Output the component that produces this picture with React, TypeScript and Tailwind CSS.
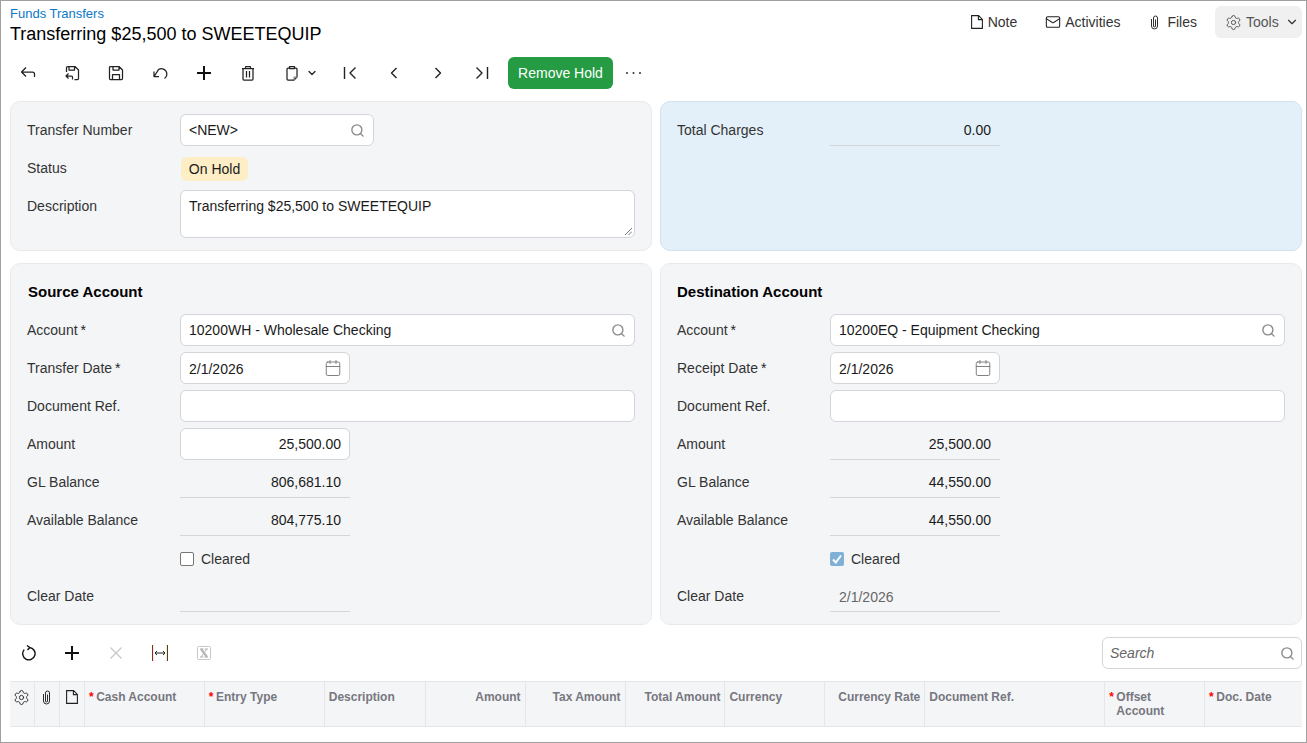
import { Calendar, ChevronDown, Mail, Search, Settings } from "lucide-react";
import type { ReactNode } from "react";

type IconProps = { className?: string };

// 16px icons, drawn 1:1 so the stroke stays at the weight of the reference
function Svg({ className = "", sw = 1.25, children }: IconProps & { sw?: number; children: ReactNode }) {
  return (
    <svg viewBox="0 0 16 16" fill="none" stroke="currentColor" strokeWidth={sw} strokeLinejoin="round" className={`h-4 w-4 ${className}`}>
      {children}
    </svg>
  );
}

const BackIcon = () => (
  <Svg><path d="M6 2.5L1.5 7 6 11.5M1.5 7H12.5a2 2 0 0 1 2 2V12" /></Svg>
);
const SaveBackIcon = () => (
  <Svg>
    <path d="M2.5 7V2.5a1 1 0 0 1 1-1H11L14.5 5v8.5a1 1 0 0 1-1 1H10.5M5 1.5V5h5.5V1.5" />
    <path d="M4.5 8.5L2 11l2.5 2.5M2 11h5.5a1 1 0 0 1 1 1v2.5" />
  </Svg>
);
const SaveIcon = () => (
  <Svg>
    <path d="M2.5 1.5H11L14.5 5v8.5a1 1 0 0 1-1 1h-11a1 1 0 0 1-1-1v-11a1 1 0 0 1 1-1zM5 1.5V5h6V1.5M4.5 14.5v-5h7v5" />
  </Svg>
);
const UndoIcon = () => (
  <Svg><path d="M2 6.5v5h5M2.5 11L6.5 4.6A4.8 4.8 0 0 1 12.5 13.5" /></Svg>
);
const PlusIcon = () => (
  <Svg sw={2} className="text-[#111]"><path d="M1 8h14M8 1v14" /></Svg>
);
const TrashIcon = () => (
  <Svg>
    <path d="M2 3.5h12M5.5 3.5V2a.5.5 0 0 1 .5-.5h4a.5.5 0 0 1 .5.5v1.5M3 3.5V14a1 1 0 0 0 1 1h8a1 1 0 0 0 1-1V3.5M6.5 6v6.5M9.5 6v6.5" />
  </Svg>
);
const PasteIcon = () => (
  <Svg>
    <path d="M5.5 3H4a1 1 0 0 0-1 1v10a1 1 0 0 0 1 1h6l3-3V4a1 1 0 0 0-1-1h-1.5M5.5 3.5v-2h5v2z" />
    <path d="M10 15v-2.5a.5.5 0 0 1 .5-.5H13" stroke="#888" />
  </Svg>
);
const FirstIcon = () => (
  <Svg sw={1.4}><path d="M2.5 2v12M13.5 2.5L8 8l5.5 5.5" /></Svg>
);
const PrevIcon = () => (
  <Svg sw={1.4}><path d="M10.5 3l-5 5 5 5" /></Svg>
);
const NextIcon = () => (
  <Svg sw={1.4}><path d="M5.5 3l5 5-5 5" /></Svg>
);
const LastIcon = () => (
  <Svg sw={1.4}><path d="M13.5 2v12M2.5 2.5L8 8l-5.5 5.5" /></Svg>
);
const RefreshIcon = () => (
  <Svg sw={1.4} className="text-[#111]"><path d="M4.2 4.6A6.2 6.2 0 1 0 9.5 2.5M7 .5l2.8 2L7.5 5" /></Svg>
);
const CloseIcon = () => (
  <Svg className="text-[#c8c8c8]"><path d="M2.5 2.5l11 11M13.5 2.5l-11 11" /></Svg>
);
const FitIcon = () => (
  <svg viewBox="0 0 16 16" className="h-4 w-4" fill="none">
    <path d="M.5 0v16" stroke="#8a2a20" strokeWidth="1.2" />
    <path d="M15.5 0v16" stroke="#5a3f10" strokeWidth="1.2" />
    <path d="M3 8h10M5 6L3 8l2 2M11 6l2 2-2 2" stroke="#222" strokeWidth="1" />
  </svg>
);
const ExcelIcon = () => (
  <svg viewBox="0 0 16 16" className="h-4 w-4" fill="none">
    <rect x="1.5" y="1.5" width="13" height="13" rx="1" stroke="#c8c8c8" />
    <path d="M5 4l6 8" stroke="#b4b4b4" strokeWidth="2.2" />
    <path d="M11 4l-6 8M4 4h3.5M8.5 4H12M4 12h3.5M8.5 12H12" stroke="#b4b4b4" />
  </svg>
);
const NoteIcon = ({ className = "" }: IconProps) => (
  <svg viewBox="0 0 12 14" className={`h-[14px] w-3 ${className}`} fill="none" stroke="currentColor" strokeWidth="1.1">
    <path d="M.6.6h7L11.4 4.4v9H.6zM7.4.6v4h4" />
  </svg>
);
const ClipIcon = ({ className = "" }: IconProps) => (
  <svg viewBox="0 0 8 15" className={`h-[15px] w-[9px] ${className}`} fill="none" stroke="currentColor" strokeWidth="0.95">
    <path d="M5 4.5V11a1 1 0 0 1-2 0V3a2 2 0 0 1 4 0v8a3 3 0 0 1-6 0V4" />
  </svg>
);

function ToolButton({ children, w = "w-11" }: { children: ReactNode; w?: string }) {
  return <div className={`flex h-8 items-center justify-center text-[#222] ${w}`}>{children}</div>;
}

function Label({ text, required }: { text?: string; required?: boolean }) {
  return (
    <div className="w-[153px] shrink-0 pb-px text-[#333]">
      {text}
      {required && <span className="ml-[3px] text-[#222]">*</span>}
    </div>
  );
}

function Row({ label, required, children }: { label?: string; required?: boolean; children?: ReactNode }) {
  return (
    <div className="flex h-[38px] items-center">
      <Label text={label} required={required} />
      {children}
    </div>
  );
}

function Input({ children, className = "" }: { children?: ReactNode; className?: string }) {
  return (
    <div className={`flex h-8 items-center rounded-md border border-[#d4d5d8] bg-white px-2 text-[#1a1a1a] ${className}`}>
      {children}
    </div>
  );
}

function Lookup({ value, w }: { value: string; w: string }) {
  return (
    <Input className={`justify-between ${w}`}>
      <span>{value}</span>
      <Search className="h-[15px] w-[15px] text-[#8a8a8a]" strokeWidth={2.2} />
    </Input>
  );
}

function DateInput({ value }: { value: string }) {
  return (
    <Input className="w-[170px] justify-between">
      <span className="mt-px">{value}</span>
      <Calendar className="-mr-px h-[18px] w-[18px] text-[#777]" strokeWidth={1.25} />
    </Input>
  );
}

function ReadOnly({ value, left, muted }: { value?: string; left?: boolean; muted?: boolean }) {
  return (
    <div className={`flex h-8 w-[170px] items-center border-b border-[#d4d5d8] pl-[9px] pr-[9px] ${left ? "justify-start pt-[2px]" : "justify-end"} ${muted ? "text-[#666]" : "text-[#1a1a1a]"}`}>
      {value}
    </div>
  );
}

function Panel({ children, blue, h }: { children: ReactNode; blue?: boolean; h: string }) {
  return (
    <div className={`w-[642px] rounded-[10px] border px-4 py-[9px] ${h} ${blue ? "border-[#cfe3f3] bg-[#e3f0f9]" : "border-[#e9eaec] bg-[#f4f5f7]"}`}>
      {children}
    </div>
  );
}

function Heading({ text, className = "" }: { text: string; className?: string }) {
  return <div className={`flex h-[38px] items-center text-[15px] font-bold text-black ${className}`}>{text}</div>;
}

const columns: { title: ReactNode; w: string; right?: boolean; required?: boolean }[] = [
  { title: "Cash Account", w: "w-[120px]", required: true },
  { title: "Entry Type", w: "w-[120px]", required: true },
  { title: "Description", w: "w-[101px]" },
  { title: "Amount", w: "w-[100px]", right: true },
  { title: "Tax Amount", w: "w-[100px]", right: true },
  { title: "Total Amount", w: "w-[100px]", right: true },
  { title: "Currency", w: "w-[100px]" },
  { title: "Currency Rate", w: "w-[100px]", right: true },
  { title: "Document Ref.", w: "w-[180px]" },
  { title: <>Offset<br />Account</>, w: "w-[100px]", required: true },
  { title: "Doc. Date", w: "w-[97px]", required: true },
];

export default function App() {
  return (
    <div className="flex h-[743px] w-[1307px] flex-col overflow-hidden border border-[#a0a0a0] bg-white font-['Liberation_Sans',Arial,sans-serif] text-sm text-[#1a1a1a]">
      {/* title bar */}
      <div className="flex h-[56px] shrink-0 items-start justify-between pl-[9px] pr-1">
        <div>
          <div className="mt-[5px] text-[13px] leading-4 text-[#0a78c8]">Funds Transfers</div>
          <div className="mt-px text-lg leading-[22px] text-black">Transferring $25,500 to SWEETEQUIP</div>
        </div>
        <div className="mt-[5px] flex h-8 items-center text-[#333]">
          <div className="flex items-center gap-[5px]"><NoteIcon className="text-[#222]" />Note</div>
          <div className="ml-7 flex items-center gap-1"><Mail className="h-4 w-4 text-[#222]" strokeWidth={1.6} />Activities</div>
          <div className="ml-[30px] flex items-center gap-2"><ClipIcon className="text-[#222]" />Files</div>
          <div className="ml-[18px] flex h-8 w-[87px] items-center gap-1 rounded-md bg-[#f0f0f0] pl-[10px] text-[#555]">
            <Settings className="h-[17px] w-[17px]" strokeWidth={1.4} />
            Tools
            <ChevronDown className="ml-[2px] h-[14px] w-[14px] text-[#333]" strokeWidth={2} />
          </div>
        </div>
      </div>

      {/* form toolbar */}
      <div className="flex h-8 shrink-0 items-center pl-[5px]">
        <ToolButton><BackIcon /></ToolButton>
        <ToolButton><SaveBackIcon /></ToolButton>
        <ToolButton><SaveIcon /></ToolButton>
        <ToolButton><UndoIcon /></ToolButton>
        <ToolButton><PlusIcon /></ToolButton>
        <ToolButton><TrashIcon /></ToolButton>
        <ToolButton w="w-[58px] pl-[14px] justify-start">
          <PasteIcon />
          <ChevronDown className="ml-[6px] h-3 w-3" strokeWidth={2.6} />
        </ToolButton>
        <ToolButton><FirstIcon /></ToolButton>
        <ToolButton><PrevIcon /></ToolButton>
        <ToolButton><NextIcon /></ToolButton>
        <ToolButton><LastIcon /></ToolButton>
        <div className="ml-1 flex h-8 w-[105px] items-center justify-center rounded-md bg-[#259b44] text-white">Remove Hold</div>
        <svg viewBox="0 0 18 4" className="ml-[12px] h-1 w-[18px] fill-[#333]">
          <circle cx="2" cy="2" r="1" />
          <circle cx="8.5" cy="2" r="1" />
          <circle cx="15" cy="2" r="1" />
        </svg>
      </div>

      {/* summary panels */}
      <div className="ml-[9px] mt-3 flex w-[1292px] shrink-0 gap-2">
        <Panel h="h-[150px]">
          <Row label="Transfer Number"><Lookup value="<NEW>" w="w-[194px]" /></Row>
          <Row label="Status">
            <span className="ml-px mt-px flex h-6 w-[67px] items-center justify-center rounded-md bg-[#feeec5] text-[#1a1a1a]">On Hold</span>
          </Row>
          <div className="flex">
            <div className="flex h-[38px] items-center"><Label text="Description" /></div>
            <div className="relative mt-[3px] h-12 w-[455px] rounded-md border border-[#d4d5d8] bg-white px-2 pt-[6px] leading-[18px]">
              Transferring $25,500 to SWEETEQUIP
              <svg viewBox="0 0 8 8" className="absolute bottom-[2px] right-[2px] h-2 w-2" stroke="#777" fill="none">
                <path d="M1 8l7-7M4.5 8L8 4.5" />
              </svg>
            </div>
          </div>
        </Panel>
        <Panel h="h-[150px]" blue>
          <Row label="Total Charges"><ReadOnly value="0.00" /></Row>
        </Panel>
      </div>

      {/* accounts */}
      <div className="ml-[9px] mt-3 flex w-[1292px] shrink-0 gap-2">
        <Panel h="h-[362px]">
          <Heading text="Source Account" className="pl-px" />
          <Row label="Account" required><Lookup value="10200WH - Wholesale Checking" w="w-[455px]" /></Row>
          <Row label="Transfer Date" required><DateInput value="2/1/2026" /></Row>
          <Row label="Document Ref."><Input className="w-[455px]" /></Row>
          <Row label="Amount"><Input className="w-[170px] justify-end">25,500.00</Input></Row>
          <Row label="GL Balance"><ReadOnly value="806,681.10" /></Row>
          <Row label="Available Balance"><ReadOnly value="804,775.10" /></Row>
          <Row>
            <span className="mt-[2px] h-[14px] w-[14px] rounded-[2px] border border-[#767676] bg-white" />
            <span className="ml-[7px] mt-[2px] text-[#333]">Cleared</span>
          </Row>
          <Row label="Clear Date"><ReadOnly left /></Row>
        </Panel>
        <Panel h="h-[362px]">
          <Heading text="Destination Account" />
          <Row label="Account" required><Lookup value="10200EQ - Equipment Checking" w="w-[455px]" /></Row>
          <Row label="Receipt Date" required><DateInput value="2/1/2026" /></Row>
          <Row label="Document Ref."><Input className="w-[455px]" /></Row>
          <Row label="Amount"><ReadOnly value="25,500.00" /></Row>
          <Row label="GL Balance"><ReadOnly value="44,550.00" /></Row>
          <Row label="Available Balance"><ReadOnly value="44,550.00" /></Row>
          <Row>
            <span className="mt-[2px] flex h-[14px] w-[14px] items-center justify-center rounded-[2px] bg-[#7fb0d6]">
              <svg viewBox="0 0 14 14" className="h-[14px] w-[14px]" fill="none" stroke="#fff" strokeWidth="2">
                <path d="M3 7.5l2.8 3L11 3.5" />
              </svg>
            </span>
            <span className="ml-[7px] mt-[2px] text-[#333]">Cleared</span>
          </Row>
          <Row label="Clear Date"><ReadOnly value="2/1/2026" left muted /></Row>
        </Panel>
      </div>

      {/* grid toolbar */}
      <div className="mt-3 flex h-8 w-[1301px] shrink-0 items-center justify-between pl-[5px]">
        <div className="flex items-center">
          <ToolButton><RefreshIcon /></ToolButton>
          <ToolButton><PlusIcon /></ToolButton>
          <ToolButton><CloseIcon /></ToolButton>
          <ToolButton><FitIcon /></ToolButton>
          <ToolButton><ExcelIcon /></ToolButton>
        </div>
        <div className="flex h-8 w-[200px] items-center justify-between rounded-md border border-[#d4d5d8] bg-white pl-[7px] pr-[6px] italic text-[#666]">
          Search
          <Search className="h-[15px] w-[15px] text-[#8a8a8a]" strokeWidth={2.2} />
        </div>
      </div>

      {/* grid header */}
      <div className="ml-[9px] mt-3 flex h-[46px] w-[1292px] shrink-0 border-y border-[#e5e6e8] bg-[#f4f5f7] text-xs font-bold leading-[14px] text-[#77777f]">
        <div className="flex w-[25px] justify-center border-r border-[#e5e6e8] pt-[7px] text-[#333]"><Settings className="h-[17px] w-[17px]" strokeWidth={1.4} /></div>
        <div className="flex w-[25px] justify-center border-r border-[#e5e6e8] pt-2 text-[#222]"><ClipIcon /></div>
        <div className="flex w-[25px] justify-center border-r border-[#e5e6e8] pt-2 text-[#222]"><NoteIcon /></div>
        {columns.map((c, i) => (
          <div key={i} className={`flex border-r border-[#e5e6e8] px-1 pt-2 last:border-r-0 ${c.w} ${c.right ? "justify-end" : ""}`}>
            {c.required && <span className="mr-[2.5px] text-[#f00]">*</span>}
            <span>{c.title}</span>
          </div>
        ))}
      </div>
    </div>
  );
}
